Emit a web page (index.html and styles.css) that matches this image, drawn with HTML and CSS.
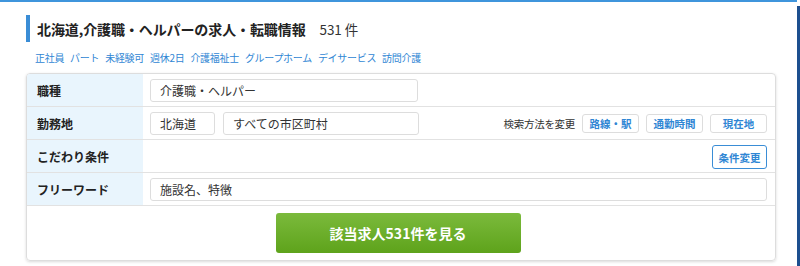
FILE: index.html
```html
<!DOCTYPE html>
<html lang="ja">
<head>
<meta charset="utf-8">
<link rel="stylesheet" href="styles.css">
</head>
<body>
<div class="page">
  <main class="main">
    <h1 class="title"><span class="title-text">北海道,介護職・ヘルパーの求人・転職情報</span><span class="count">531 件</span></h1>
    <nav class="tags">
      <a>正社員</a><a>パート</a><a>未経験可</a><a>週休2日</a><a>介護福祉士</a><a>グループホーム</a><a>デイサービス</a><a>訪問介護</a>
    </nav>
    <section class="card">
      <div class="row">
        <div class="label">職種</div>
        <div class="field"><div class="input w-job">介護職・ヘルパー</div></div>
      </div>
      <div class="row">
        <div class="label">勤務地</div>
        <div class="field">
          <div class="input w-pref">北海道</div>
          <div class="input w-city">すべての市区町村</div>
          <span class="method">検索方法を変更</span>
          <div class="btns">
            <span class="btn">路線・駅</span><span class="btn">通勤時間</span><span class="btn">現在地</span>
          </div>
        </div>
      </div>
      <div class="row">
        <div class="label">こだわり条件</div>
        <div class="field end"><span class="btn btn-blue">条件変更</span></div>
      </div>
      <div class="row">
        <div class="label">フリーワード</div>
        <div class="field"><div class="input w-free">施設名、特徴</div></div>
      </div>
      <div class="submit-area"><button class="submit">該当求人531件を見る</button></div>
    </section>
  </main>
  <div class="sidebar-edge"></div>
</div>
</body>
</html>
```

FILE: styles.css
```css
* { box-sizing: border-box; }
html, body { margin: 0; padding: 0; background: #fff; }
body {
  font-family: "Noto Sans CJK JP", "Noto Sans", sans-serif;
  color: #333;
  width: 800px;
  height: 266px;
  overflow: hidden;
}
.page { display: flex; height: 266px; }
.main {
  width: 797px;
  border-top: 2px solid #3f95dc;
  padding: 13px 22px 0 26px;
}
.sidebar-edge {
  width: 3px;
  margin-top: 6px;
  background: #1d4f8f;
}
.title {
  margin: 0;
  display: flex;
  align-items: center;
  height: 27px;
  border-left: 4px solid #3a8dd6;
  padding-left: 7px;
  font-size: 14px;
  font-weight: bold;
  color: #222;
  letter-spacing: -0.1px;
}
.count {
  font-weight: normal;
  font-size: 13.5px;
  margin-left: 14px;
  color: #333;
}
.tags {
  display: flex;
  gap: 6px;
  margin: 9px 0 0 9px;
  font-size: 10px;
  line-height: 14px;
  height: 18px;
}
.tags a { color: #2f86d4; letter-spacing: -0.3px; }
.card {
  margin-top: 4px;
  border: 1px solid #ddd;
  border-radius: 4px;
  box-shadow: 0 1px 3px rgba(0,0,0,0.15);
  overflow: hidden;
  width: 750px;
}
.row {
  display: flex;
  border-bottom: 1px solid #e2e2e2;
  height: 33px;
}
.label {
  width: 116px;
  background: #e9f5fd;
  font-size: 12px;
  font-weight: bold;
  color: #222;
  padding-left: 10px;
  display: flex;
  align-items: center;
}
.field {
  flex: 1;
  display: flex;
  align-items: center;
  padding: 0 8px 0 7px;
  gap: 8px;
}
.field.end { justify-content: flex-end; }
.input {
  height: 23px;
  border: 1px solid #ddd;
  border-radius: 3px;
  font-size: 12px;
  color: #333;
  display: flex;
  align-items: center;
  padding-left: 9px;
}
.w-job { width: 268px; }
.w-pref { width: 65px; }
.w-city { width: 196px; }
.w-free { flex: 1; }
.method {
  font-size: 10.5px;
  color: #333;
  margin-left: auto;
  margin-right: -1px;
  letter-spacing: -0.3px;
}
.btns { display: flex; gap: 7px; }
.btn {
  display: inline-flex;
  align-items: center;
  justify-content: center;
  width: 57px;
  height: 19px;
  border: 1px solid #ddd;
  border-radius: 3px;
  font-size: 10.5px;
  font-weight: bold;
  color: #2f86d4;
  background: #fff;
}
.btn-blue {
  width: 55px;
  height: 24px;
  border-color: #3a8dd6;
  margin-top: 2px;
}
.submit-area {
  display: flex;
  justify-content: center;
  padding: 7px 0 6px;
  height: 54px;
}
.submit {
  width: 245px;
  height: 40px;
  border: none;
  border-radius: 3px;
  background: linear-gradient(#7bba3c, #5ea31b);
  color: #fff;
  font-family: inherit;
  font-size: 14px;
  font-weight: bold;
  margin-right: 6px;
}
```
